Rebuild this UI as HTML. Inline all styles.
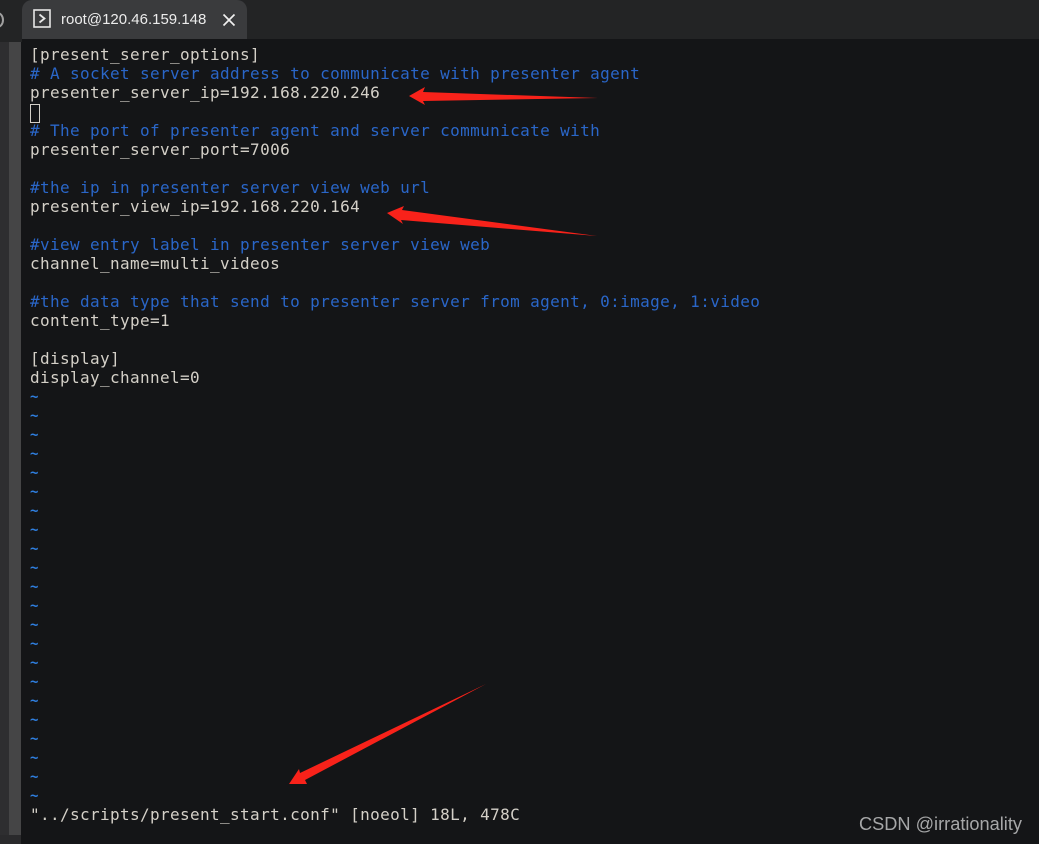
<!DOCTYPE html>
<html><head><meta charset="utf-8">
<style>
html,body{margin:0;padding:0;background:#141517;}
#r{position:relative;width:1039px;height:844px;overflow:hidden;background:#141517;}
.a{position:absolute;}
.l{position:absolute;left:30px;height:19px;line-height:19px;font-family:"DejaVu Sans Mono",monospace;font-size:16px;letter-spacing:.37px;white-space:pre;color:#d4d0c8;}
.b{color:#2a66c8;}
.t{color:#2f7fe0;font-size:14px;font-weight:bold;margin-top:1px;}
</style></head><body><div id="r">
<div class="a" style="left:0;top:0;width:1039px;height:39px;background:#232425;"></div>
<div class="a" style="left:0;top:42px;width:9px;height:802px;background:#2e2e30;"></div>
<div class="a" style="left:0;top:39px;width:22px;height:3px;background:#232425;"></div>
<div class="a" style="left:9px;top:42px;width:12px;height:793px;background:#454546;"></div>
<div class="a" style="left:0;top:835px;width:21px;height:9px;background:#2a2a2c;"></div>
<div class="a" style="left:0;top:10px;width:5px;height:18px;overflow:hidden;"><div style="margin-left:-9px;width:9px;height:12px;margin-top:2px;border:2px solid #a0a0a0;border-radius:50%;"></div></div>
<div class="a" style="left:22px;top:0;width:225px;height:39px;background:#3a3b3d;border-radius:10px 10px 0 0;"></div>
<svg class="a" style="left:33px;top:9px" width="19" height="20" viewBox="0 0 19 20"><rect x="1" y="1" width="16" height="17" fill="none" stroke="#e6e6e6" stroke-width="1.6"/><path d="M6.5 5.5L11.5 9.5L6.5 13.5" fill="none" stroke="#e6e6e6" stroke-width="1.8"/></svg>
<div class="a" style="left:61px;top:10px;height:20px;line-height:20px;font-family:'Liberation Sans',sans-serif;font-size:15px;color:#ececec;white-space:pre;">root@120.46.159.148</div>
<svg class="a" style="left:222px;top:13px" width="14" height="14" viewBox="0 0 14 14"><path d="M1.5 1.5L12.5 12.5M12.5 1.5L1.5 12.5" stroke="#f0f0f0" stroke-width="1.7"/></svg>

<div class="l" style="top:45px">[present_serer_options]</div>
<div class="l b" style="top:64px"># A socket server address to communicate with presenter agent</div>
<div class="l" style="top:83px">presenter_server_ip=192.168.220.246</div>
<div class="a" style="left:30px;top:104px;width:8px;height:17px;border:1px solid #d4d0c8;"></div>
<div class="l b" style="top:121px"># The port of presenter agent and server communicate with</div>
<div class="l" style="top:140px">presenter_server_port=7006</div>
<div class="l b" style="top:178px">#the ip in presenter server view web url</div>
<div class="l" style="top:197px">presenter_view_ip=192.168.220.164</div>
<div class="l b" style="top:235px">#view entry label in presenter server view web</div>
<div class="l" style="top:254px">channel_name=multi_videos</div>
<div class="l b" style="top:292px">#the data type that send to presenter server from agent, 0:image, 1:video</div>
<div class="l" style="top:311px">content_type=1</div>
<div class="l" style="top:349px">[display]</div>
<div class="l" style="top:368px">display_channel=0</div>
<div class="l t" style="top:387px">~</div>
<div class="l t" style="top:406px">~</div>
<div class="l t" style="top:425px">~</div>
<div class="l t" style="top:444px">~</div>
<div class="l t" style="top:463px">~</div>
<div class="l t" style="top:482px">~</div>
<div class="l t" style="top:501px">~</div>
<div class="l t" style="top:520px">~</div>
<div class="l t" style="top:539px">~</div>
<div class="l t" style="top:558px">~</div>
<div class="l t" style="top:577px">~</div>
<div class="l t" style="top:596px">~</div>
<div class="l t" style="top:615px">~</div>
<div class="l t" style="top:634px">~</div>
<div class="l t" style="top:653px">~</div>
<div class="l t" style="top:672px">~</div>
<div class="l t" style="top:691px">~</div>
<div class="l t" style="top:710px">~</div>
<div class="l t" style="top:729px">~</div>
<div class="l t" style="top:748px">~</div>
<div class="l t" style="top:767px">~</div>
<div class="l t" style="top:786px">~</div>
<div class="l" style="top:805px">"../scripts/present_start.conf" [noeol] 18L, 478C</div>

<svg class="a" style="left:0;top:0" width="1039" height="844" viewBox="0 0 1039 844">
<path d="M409 96L425 87L423 92L598 98L423 101L425 105Z" fill="#f8221a"/>
<path d="M387 213L404 206L402 210L597 236L401 220L403 224Z" fill="#f8221a"/>
<path d="M289 784L299 769L300 773L486 684L305 780L307 784Z" fill="#f8221a"/>
</svg>
<div class="a" style="left:859px;top:813px;height:22px;line-height:22px;font-family:'Liberation Sans',sans-serif;font-size:18.2px;color:#a6a7a8;white-space:pre;">CSDN @irrationality</div>
</div></body></html>
